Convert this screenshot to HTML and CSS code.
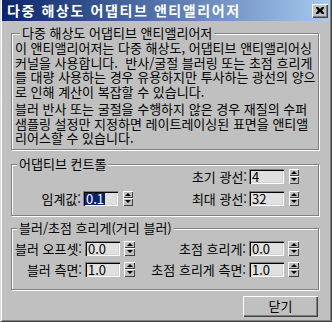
FILE: index.html
```
<!DOCTYPE html>
<html lang="ko">
<head>
<meta charset="utf-8">
<link rel="stylesheet" href="styles.css">
</head>
<body>
<div class="window">
  <div class="titlebar">
    <span class="title">다중 해상도 어댑티브 앤티앨리어저</span>
    <span class="close"><svg width="8" height="7" viewBox="0 0 8 7"><path d="M0 0h2l2 2 2-2h2v1L6 3.5 8 6v1H6L4 5 2 7H0V6l2-2.5L0 1z" fill="#000"/></svg></span>
  </div>
  <div class="body">
    <div class="group g1">
      <div class="group-title">다중 해상도 어댑티브 앤티앨리어저</div>
      <p class="para">이 앤티앨리어저는 다중 해상도, 어댑티브 앤티앨리어싱
커널을 사용합니다.  반사/굴절 블러링 또는 초점 흐리게
를 대량 사용하는 경우 유용하지만 투사하는 광선의 양으
로 인해 계산이 복잡할 수 있습니다.</p>
      <p class="para">블러 반사 또는 굴절을 수행하지 않은 경우 재질의 수퍼
샘플링 설정만 지정하면 레이트레이싱된 표면을 앤티앨
리어스할 수 있습니다.</p>
    </div>

    <div class="group g2">
      <div class="group-title">어댑티브 컨트롤</div>
      <div class="fields fields2">
        <span></span><span></span><span></span>
        <label class="lbl">초기 광선:</label>
        <span class="edit">4</span>
        <span class="spin"><span class="up"></span><span class="dn"></span></span>

        <label class="lbl">임계값:</label>
        <span class="edit"><span class="sel">0.1</span></span>
        <span class="spin"><span class="up"></span><span class="dn"></span></span>
        <label class="lbl">최대 광선:</label>
        <span class="edit">32</span>
        <span class="spin"><span class="up"></span><span class="dn"></span></span>
      </div>
    </div>

    <div class="group g3">
      <div class="group-title">블러/초점 흐리게(거리 블러)</div>
      <div class="fields fields3">
        <label class="lbl">블러 오프셋:</label>
        <span class="edit">0.0</span>
        <span class="spin"><span class="up"></span><span class="dn"></span></span>
        <label class="lbl">초점 흐리게:</label>
        <span class="edit">0.0</span>
        <span class="spin"><span class="up"></span><span class="dn"></span></span>

        <label class="lbl">블러 측면:</label>
        <span class="edit">1.0</span>
        <span class="spin"><span class="up"></span><span class="dn"></span></span>
        <label class="lbl">초점 흐리게 측면:</label>
        <span class="edit">1.0</span>
        <span class="spin"><span class="up"></span><span class="dn"></span></span>
      </div>
    </div>

    <div class="actions">
      <span class="btn">닫기</span>
    </div>
  </div>
</div>
</body>
</html>
```

FILE: styles.css
```
* { box-sizing: border-box; }
html, body { margin: 0; padding: 0; }
body {
  width: 332px;
  height: 322px;
  overflow: hidden;
  background: #c0c0c0;
  font-family: "Noto Sans CJK KR", "Noto Sans", sans-serif;
  font-size: 13px;
  color: #000;
}
.window {
  width: 332px;
  height: 322px;
  background: #c0c0c0;
  border-left: 1px solid #dcdcdc;
  border-right: 1px solid #404040;
  border-bottom: 1px solid #404040;
  box-shadow: inset 1px 0 #fff, inset -1px -1px #808080;
  padding: 0 1px 1px 1px;
  display: flex;
  flex-direction: column;
}
.titlebar {
  height: 21px;
  background: linear-gradient(to right, #0a246a, #a6caf0);
  display: flex;
  align-items: center;
  justify-content: space-between;
  padding: 0 2px 0 5px;
}
.title {
  color: #fff;
  font-weight: bold;
  font-size: 14px;
  letter-spacing: 1.6px;
  line-height: 21px;
  white-space: nowrap;
}
.close {
  width: 16px;
  height: 14px;
  background: #c0c0c0;
  box-shadow: inset 1px 1px #fff, inset -1px -1px #404040, inset -2px -2px #808080;
  display: flex;
  align-items: center;
  justify-content: center;
  padding: 0 1px 1px 0;
}
.close svg { display: block; }
.body {
  flex: 1;
  display: flex;
  flex-direction: column;
}
.group {
  border: 1px solid #808080;
  box-shadow: inset 1px 1px #fff, 1px 1px #fff;
  margin: 0 11px 0 9px;
}
.group-title {
  width: fit-content;
  margin: -7px 0 0 5px;
  padding: 0 2px;
  line-height: 12px;
  height: 12px;
  background: #c0c0c0;
  white-space: nowrap;
}
.g1 { margin-top: 12px; padding: 0 3px 3px 3px; }
.g2 { margin-top: 14px; padding: 0 0 9px 0; }
.g3 { margin-top: 12px; padding: 0 0 12px 0; }
.para {
  margin: 0;
  white-space: pre;
  line-height: 14.5px;
}
.g1 .para:first-of-type { margin-top: 2px; }
.para + .para { margin-top: 3px; }

.fields {
  display: grid;
  align-items: center;
}
.fields2 {
  margin-top: -1px;
  grid-template-columns: 70px 36px 15px 115px 36px 15px;
  grid-template-rows: 15px 15px;
  row-gap: 7px;
}
.fields3 {
  margin-top: 7px;
  grid-template-columns: 72px 36px 15px 113px 36px 16px;
  grid-template-rows: 15px 15px;
  row-gap: 6px;
}
.lbl {
  text-align: right;
  white-space: nowrap;
  line-height: 15px;
  padding-right: 1px;
}
.fields3 .lbl { padding-right: 2px; }
.edit {
  margin-left: 1px;
  width: 35px;
  height: 15px;
  background: #e0e0e0;
  box-shadow: inset 1px 1px #808080, inset 2px 2px #000, inset -1px -1px #fff, inset -2px -2px #d4d4d4;
  padding: 1px 0 0 3px;
  line-height: 14px;
  font-size: 13px;
  white-space: nowrap;
}
.sel {
  display: inline-block;
  background: #0a246a;
  color: #fff;
  line-height: 12px;
  padding: 0 1px;
  margin-left: -1px;
}
.spin {
  margin-left: 5px;
  width: 10px;
  height: 15px;
  display: flex;
  flex-direction: column;
}
.fields3 .spin { margin-left: 4px; width: 11px; }
.up, .dn {
  flex: 1;
  background: #c0c0c0;
  box-shadow: inset 1px 1px #fff, inset -1px -1px #404040;
  display: flex;
  align-items: center;
  justify-content: center;
}
.up::before, .dn::before {
  content: "";
  width: 0;
  height: 0;
  border-left: 3px solid transparent;
  border-right: 3px solid transparent;
}
.up::before { border-bottom: 3px solid #000; }
.dn::before { border-top: 3px solid #000; }

.actions {
  display: flex;
  justify-content: flex-end;
  margin: 6px 12px 0 0;
}
.btn {
  width: 75px;
  height: 21px;
  background: #c0c0c0;
  box-shadow: inset 1px 1px #fff, inset -1px -1px #404040, inset -2px -2px #808080;
  display: flex;
  align-items: center;
  justify-content: center;
  line-height: 14px;
}
```
